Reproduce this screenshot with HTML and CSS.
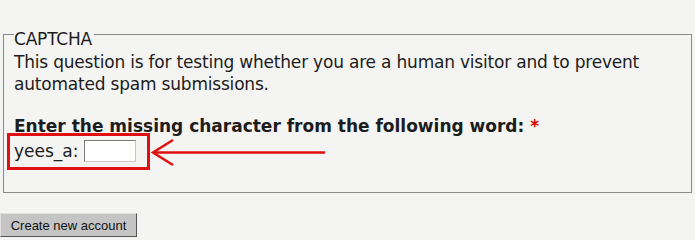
FILE: index.html
```html
<!DOCTYPE html>
<html>
<head>
<meta charset="utf-8">
<link rel="stylesheet" href="styles.css">
</head>
<body>
<div class="page">
  <fieldset class="captcha">
    <legend class="legend">CAPTCHA</legend>
    <p class="desc">This question is for testing whether you are a human visitor and to prevent automated spam submissions.</p>
    <div class="question">Enter the missing character from the following word: <span class="req">*</span></div>
    <div class="answer">
      <label class="word" for="cap">yees_a:</label>
      <input id="cap" class="box" type="text">
    </div>
  </fieldset>
  <button class="submit" type="button">Create new account</button>
  <svg class="annot" width="695" height="240" viewBox="0 0 695 240">
    <rect x="8.5" y="134.5" width="140" height="34" fill="none" stroke="#e01010" stroke-width="3"/>
    <line x1="153" y1="152.5" x2="325" y2="152.5" stroke="#e01010" stroke-width="2.5"/>
    <polyline points="173,140 153,152.5 173,165" fill="none" stroke="#e01010" stroke-width="2.5"/>
  </svg>
</div>
</body>
</html>
```

FILE: styles.css
```css
html, body {
  margin: 0;
  padding: 0;
  background: #f4f4f2;
}
.page {
  position: relative;
  width: 695px;
  height: 240px;
  padding-top: 20px;
  box-sizing: border-box;
  font-family: "DejaVu Sans", Verdana, sans-serif;
  font-size: 17px;
  color: #1c1c1c;
}
.captcha {
  margin: 0 3px;
  padding: 0 10px 30px;
  border: 1px solid #8a8a8a;
}
.legend {
  padding: 9px 2px 0 0;
  line-height: 20px;
  letter-spacing: -0.2px;
}
.desc {
  margin: 2px 0 0;
  line-height: 22px;
  letter-spacing: -0.2px;
}
.question {
  margin-top: 21px;
  font-weight: bold;
  line-height: 21px;
}
.req {
  color: #d40000;
}
.answer {
  display: flex;
  align-items: center;
  gap: 6px;
  height: 22px;
  margin-top: 3px;
  line-height: 21px;
}
.box {
  width: 52px;
  height: 22px;
  box-sizing: border-box;
  margin: 0;
  padding: 0;
  background: #fff;
  border: 1px solid;
  border-color: #7a7a7a #c8c8c8 #c8c8c8 #7a7a7a;
}
.submit {
  display: block;
  margin-top: 20px;
  width: 137px;
  height: 24px;
  padding: 0;
  font-family: "Liberation Sans", Arial, sans-serif;
  font-size: 13px;
  color: #111;
  background: #c4c4c4;
  border: 1px solid;
  border-color: #e0e0e0 #555 #555 #e0e0e0;
}
.annot {
  position: absolute;
  left: 0;
  top: 0;
  pointer-events: none;
}
```
